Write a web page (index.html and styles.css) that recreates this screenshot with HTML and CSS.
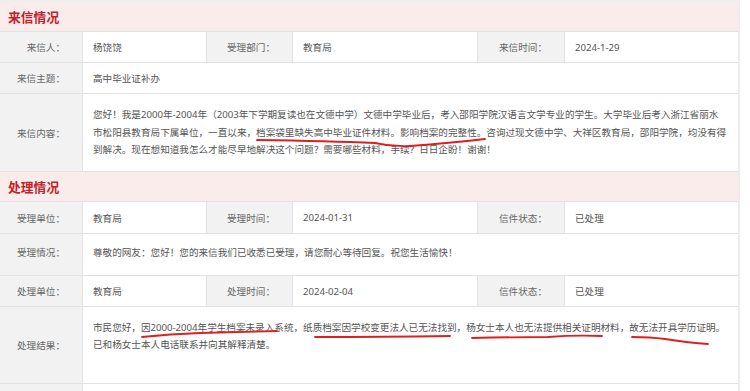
FILE: index.html
```html
<!DOCTYPE html>
<html lang="zh-CN">
<head>
    <meta charset="UTF-8">
    <meta name="viewport" content="width=device-width, initial-scale=1.0">
    <title>信件详情</title>
    <link rel="stylesheet" href="styles.css">
</head>
<body>
    <div class="page">

        <!-- 来信情况 -->
        <section class="block">
            <h2 class="block-title">来信情况</h2>
            <div class="row">
                <div class="label">来信人：</div>
                <div class="value">杨饶饶</div>
                <div class="label">受理部门：</div>
                <div class="value">教育局</div>
                <div class="label">来信时间：</div>
                <div class="value">2024-1-29</div>
            </div>
            <div class="row">
                <div class="label">来信主题：</div>
                <div class="value wide">高中毕业证补办</div>
            </div>
            <div class="row row-text">
                <div class="label">来信内容：</div>
                <div class="value wide text">您好！我是2000年-2004年（2003年下学期复读也在文德中学）文德中学毕业后，考入邵阳学院汉语言文学专业的学生。大学毕业后考入浙江省丽水<br>市松阳县教育局下属单位，一直以来，档案袋里缺失高中毕业证件材料。影响档案的完整性。咨询过现文德中学、大祥区教育局，邵阳学院，均没有得<br>到解决。现在想知道我怎么才能尽早地解决这个问题？需要哪些材料，手续？日日企盼！谢谢！</div>
            </div>
        </section>

        <!-- 处理情况 -->
        <section class="block">
            <h2 class="block-title">处理情况</h2>
            <div class="row row-tall">
                <div class="label">受理单位：</div>
                <div class="value">教育局</div>
                <div class="label">受理时间：</div>
                <div class="value">2024-01-31</div>
                <div class="label">信件状态：</div>
                <div class="value">已处理</div>
            </div>
            <div class="row row-reply">
                <div class="label">受理情况：</div>
                <div class="value wide">尊敬的网友：您好！您的来信我们已收悉已受理，请您耐心等待回复。祝您生活愉快！</div>
            </div>
            <div class="row">
                <div class="label">处理单位：</div>
                <div class="value">教育局</div>
                <div class="label">处理时间：</div>
                <div class="value">2024-02-04</div>
                <div class="label">信件状态：</div>
                <div class="value">已处理</div>
            </div>
            <div class="row row-result">
                <div class="label">处理结果：</div>
                <div class="value wide text">市民您好，因2000-2004年学生档案未录入系统，纸质档案因学校变更法人已无法找到，杨女士本人也无法提供相关证明材料，故无法开具学历证明。<br>已和杨女士本人电话联系并向其解释清楚。<br>&nbsp;</div>
            </div>
            <div class="row">
                <div class="label">&nbsp;</div>
                <div class="value wide"></div>
            </div>
        </section>

        <!-- 红笔标注 -->
        <svg class="marks" width="750" height="391" viewBox="0 0 750 391">
            <g fill="none" stroke="#dd1f1f" stroke-width="1.8" stroke-linecap="round">
                <path d="M257 140 Q330 141 375 143 Q392 147 410 146 Q450 143 485 139"/>
                <path d="M142 337 Q170 334 200 333 Q240 332 277 331"/>
                <path d="M315 337 Q380 337 450 336"/>
                <path d="M472 338 Q510 337 548 337 Q575 335 602 336"/>
                <path d="M632 337 Q650 337 665 339 Q690 343 708 344"/>
            </g>
        </svg>
    </div>
</body>
</html>
```

FILE: styles.css
```css
/* Página */
body {
    margin: 0;
    padding: 0;
    background: #fff;
    font-family: "Noto Sans", "Noto Sans CJK SC", sans-serif;
    font-size: 9.6px;
    color: #555;
}

.page {
    position: relative;
    width: 738px;
    height: 391px;
    overflow: hidden;
    border-top: 2px solid #eeeeee;
    border-right: 2px solid #ececec;
}

/* Títulos de bloque */
.block-title {
    margin: 0;
    height: 30px;
    padding-left: 8px;
    display: flex;
    align-items: center;
    background-color: #f9ecea;
    color: #c0232b;
    font-family: "Noto Sans CJK SC", sans-serif;
    font-size: 12.8px;
    font-weight: bold;
    border-bottom: 1px solid #e2e2e2;
    box-sizing: border-box;
}

/* Filas */
.row {
    display: grid;
    grid-template-columns: 83px 124px 86px 185px 87px 173px;
    height: 31px;
    border-bottom: 1px solid #e2e2e2;
    box-sizing: border-box;
}

.row-text {
    height: 78px;
}

.row-tall {
    height: 32px;
}

.row-reply {
    height: 42px;
}

.row-reply .label,
.row-reply .value {
    padding-bottom: 6px;
}

.row-result {
    height: 77px;
}

.label,
.value {
    display: flex;
    align-items: center;
    border-right: 1px solid #e2e2e2;
    box-sizing: border-box;
}

.row > div:last-child {
    border-right: none;
}

.label {
    justify-content: flex-end;
    padding-right: 17px;
    background-color: #f2f2f2;
    color: #666;
}

.value {
    padding-left: 10px;
    background-color: #fff;
}

.value.wide {
    grid-column: 2 / 7;
}

.value.text {
    display: block;
    align-self: center;
    padding-right: 4px;
    line-height: 17.4px;
    white-space: nowrap;
}

/* Marcas en rojo */
.marks {
    position: absolute;
    top: -2px;
    left: 0;
    pointer-events: none;
}
```
